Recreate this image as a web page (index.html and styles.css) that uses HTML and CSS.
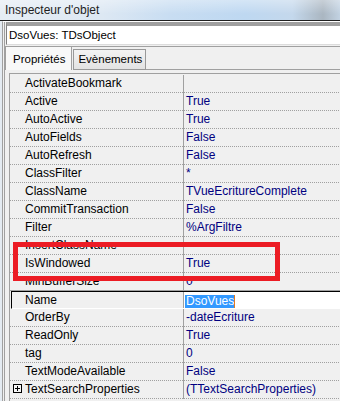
FILE: index.html
```html
<!DOCTYPE html>
<html>
<head>
<meta charset="utf-8">
<link rel="stylesheet" href="styles.css">
</head>
<body>
<div class="window">
  <div class="titlebar">Inspecteur d'objet</div>
  <div class="client">
    <div class="inner">
      <div class="combo">DsoVues: TDsObject</div>
      <div class="tabs">
        <div class="tab active">Propriétés</div>
        <div class="tab">Evènements</div>
        <div class="tab-fill"></div>
      </div>
      <div class="grid">
        <div class="row"><div class="name">ActivateBookmark</div><div class="val"></div></div>
        <div class="row"><div class="name">Active</div><div class="val">True</div></div>
        <div class="row"><div class="name">AutoActive</div><div class="val">True</div></div>
        <div class="row"><div class="name">AutoFields</div><div class="val">False</div></div>
        <div class="row"><div class="name">AutoRefresh</div><div class="val">False</div></div>
        <div class="row"><div class="name">ClassFilter</div><div class="val">*</div></div>
        <div class="row"><div class="name">ClassName</div><div class="val">TVueEcritureComplete</div></div>
        <div class="row"><div class="name">CommitTransaction</div><div class="val">False</div></div>
        <div class="row"><div class="name">Filter</div><div class="val">%ArgFiltre</div></div>
        <div class="row"><div class="name">InsertClassName</div><div class="val"></div></div>
        <div class="row"><div class="name">IsWindowed</div><div class="val">True</div></div>
        <div class="row pre-sel"><div class="name">MinBufferSize</div><div class="val">0</div></div>
        <div class="row sel"><div class="name">Name</div><div class="val"><span class="selected-text">DsoVues</span><span class="caret"></span></div></div>
        <div class="row"><div class="name">OrderBy</div><div class="val">-dateEcriture</div></div>
        <div class="row"><div class="name">ReadOnly</div><div class="val">True</div></div>
        <div class="row"><div class="name">tag</div><div class="val">0</div></div>
        <div class="row"><div class="name">TextModeAvailable</div><div class="val">False</div></div>
        <div class="row expand"><div class="name"><svg class="plus" width="9" height="9" viewBox="0 0 9 9"><rect x="0.5" y="0.5" width="8" height="8" fill="#f6f6f6" stroke="#000"/><path d="M2 4.5h5M4.5 2v5" stroke="#000"/></svg><span>TextSearchProperties</span></div><div class="val">(TTextSearchProperties)</div></div>
      </div>
    </div>
  </div>
  <div class="annotation"></div>
</div>
</body>
</html>
```

FILE: styles.css
```css
html, body {
  margin: 0;
  padding: 0;
}

body {
  width: 340px;
  height: 401px;
  overflow: hidden;
  background: #e4ebf2;
  font-family: "Liberation Sans", Arial, sans-serif;
}

.window {
  position: relative;
  height: 401px;
}

.titlebar {
  height: 20px;
  line-height: 20px;
  padding-left: 5px;
  font-size: 12px;
  color: #1e1e1e;
  border-bottom: 1px solid #1f1f1f;
  background:
    linear-gradient(to bottom, rgba(255,255,255,0.35), rgba(255,255,255,0) 70%),
    linear-gradient(to right, #e6edf4 0%, #dde8f3 30%, #c8ddf2 50%, #bed8f1 72%, #c4d8ec 86%, #aab6c1 95%, #c2d2e2 100%);
}

.client {
  margin-left: 2px;
  border-left: 1px solid #a0a0a0;
  border-top: 1px solid #ffffff;
  padding-left: 1px;
  background: #f0f0f0;
  height: 380px;
}

.inner {
  border-left: 1px solid #a0a0a0;
  height: 380px;
}

.combo {
  margin-left: 1px;
  height: 18px;
  line-height: 18px;
  padding-left: 2px;
  font-size: 11.5px;
  color: #000;
  background: #fff;
  border-top: 4px solid #a0a0a0;
  border-left: 1px solid #808080;
  border-bottom: 1px solid #dcdcdc;
  margin-bottom: 1px;
  white-space: nowrap;
}

.tabs {
  display: flex;
  align-items: flex-end;
  height: 23px;
  border-top: 1px solid #a0a0a0;
  font-size: 11.5px;
  color: #000;
}

.tab {
  box-sizing: border-box;
  height: 21px;
  line-height: 19px;
  padding: 0 3px 0 4px;
  margin-left: 1px;
  border: 1px solid #999;
  background: linear-gradient(to bottom, #f3f3f3, #e3e3e3);
  white-space: nowrap;
}

.tab.active {
  height: 23px;
  line-height: 20px;
  padding: 2px 6px 0 7px;
  margin-left: 0;
  border: none;
  border-left: 1px solid #a0a0a0;
  border-right: 1px solid #a0a0a0;
  background: #f8f8f8;
}

.tab-fill {
  flex: 1;
  border-bottom: 1px solid #a0a0a0;
}

.grid {
  margin-top: 3px;
  margin-left: 4px;
  border-left: 1px solid #a0a0a0;
  border-top: 1px solid #a0a0a0;
  padding-top: 1px;
  font-size: 12px;
  background: #f0f0f0;
  height: 330px;
}

.row {
  display: flex;
  height: 18px;
  background: repeating-linear-gradient(to right, #a0a0a0 0 1px, transparent 1px 2px) left bottom / 100% 1px no-repeat;
}

.row.pre-sel {
  background: linear-gradient(#a0a0a0, #a0a0a0) left bottom / 100% 1px no-repeat;
}

.name {
  box-sizing: border-box;
  width: 173px;
  padding-left: 15px;
  line-height: 17px;
  color: #000;
  white-space: nowrap;
  overflow: hidden;
}

.val {
  flex: 1;
  border-left: 1px solid #a0a0a0;
  padding-left: 2px;
  line-height: 17px;
  color: #000080;
  white-space: nowrap;
  overflow: hidden;
}

.row.sel {
  box-sizing: border-box;
  margin-left: 1px;
  border-top: 1px solid #000;
  border-left: 1px solid #000;
  border-bottom: 1px solid #fff;
  background: none;
}

.row.sel .name {
  width: 171px;
  padding-left: 13px;
  line-height: 16px;
}

.row.sel .val {
  box-sizing: border-box;
  height: 16px;
  padding-top: 3px;
  line-height: 13px;
  background: #fff;
}

.selected-text {
  display: inline-block;
  vertical-align: top;
  line-height: 13px;
  margin-left: -1px;
  padding-left: 1px;
  background: #3399ff;
  color: #fff;
}

.caret {
  display: inline-block;
  vertical-align: top;
  width: 1px;
  height: 13px;
  background: #e07b22;
}

.row.expand .name {
  display: flex;
  align-items: flex-start;
  padding-left: 3px;
}

.plus {
  flex: none;
  margin-top: 3px;
  margin-right: 3px;
}

.annotation {
  position: absolute;
  left: 13px;
  top: 242px;
  width: 267px;
  height: 39px;
  box-sizing: border-box;
  border: 5px solid #ec1c24;
}
```
